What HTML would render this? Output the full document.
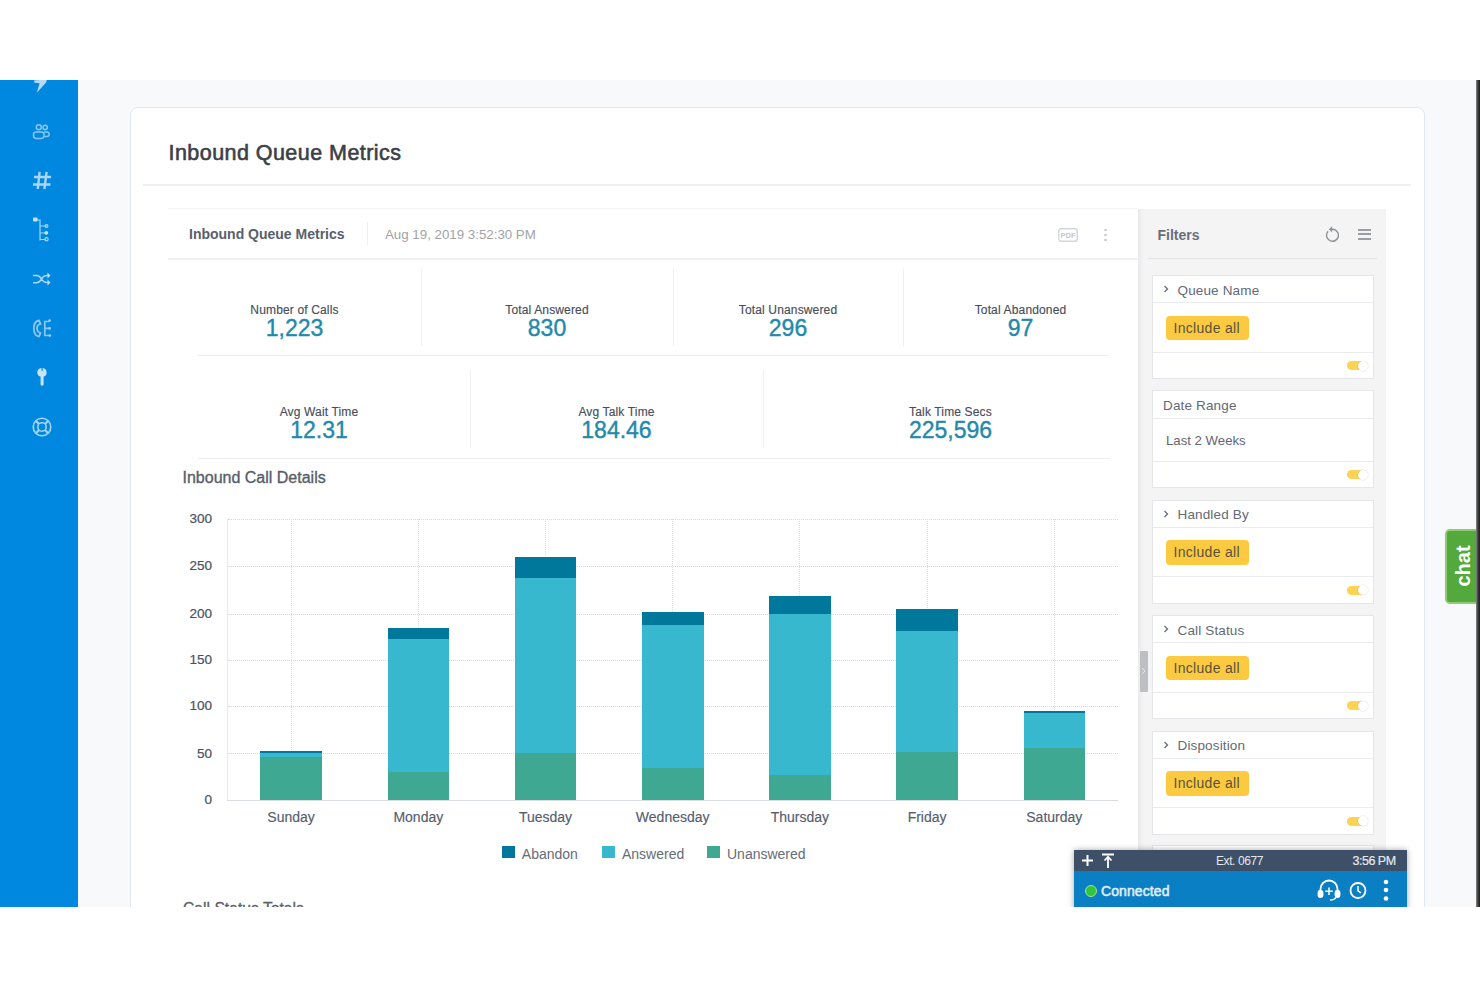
<!DOCTYPE html>
<html><head><meta charset="utf-8">
<style>
*{margin:0;padding:0;box-sizing:border-box}
html,body{width:1480px;height:987px;background:#fff;overflow:hidden;font-family:"Liberation Sans",sans-serif}
.abs{position:absolute;overflow:visible}
#wrap{position:absolute;left:0;top:0;width:1480px;height:907px;overflow:hidden}
#bg{position:absolute;left:0;top:80px;width:1480px;height:827px;background:#F8F9FB}
#topw{position:absolute;left:0;top:0;width:1480px;height:80px;background:#fff;z-index:50}
#side{position:absolute;left:0;top:80px;width:78px;height:827px;background:#0088E0}
#strip{position:absolute;z-index:40;left:1476px;top:80px;width:4px;height:827px;background:linear-gradient(90deg,#8a8a8a,#3a3a3a 50%,#1e1e1e)}
#card{position:absolute;left:130px;top:106.5px;width:1295px;height:900px;background:#fff;border:1.2px solid #DFE7F0;border-radius:8px}
.t{position:absolute;white-space:nowrap;line-height:1}
.hl{position:absolute;height:1px;background:#ECEEF0}
.vl{position:absolute;width:1px;background:#EEF0F2}
.lbl{position:absolute;font-size:12px;letter-spacing:0.15px;-webkit-text-stroke:0.15px #474E5C;color:#474E5C;text-align:center;line-height:1;white-space:nowrap}
.val{position:absolute;font-size:23px;color:#1F8AAC;-webkit-text-stroke:0.4px #1F8AAC;text-align:center;line-height:1;white-space:nowrap}
.ylab{position:absolute;font-size:13.5px;color:#4A5163;-webkit-text-stroke:0.2px #4A5163;text-align:right;width:40px;line-height:1}
.xlab{position:absolute;font-size:14px;color:#555D6E;-webkit-text-stroke:0.15px #555D6E;text-align:center;width:120px;line-height:1}
.gh{position:absolute;left:228px;width:890px;height:0;border-top:1px dotted #D6D9DE}
.gv{position:absolute;top:519px;height:281px;width:0;border-left:1px dotted #DADDE1}
.bar{position:absolute;width:61.5px}
.fbox{position:absolute;left:1152px;width:222px;background:#fff;border:1px solid #E4E6E9}
.fhead{position:absolute;font-size:13.5px;letter-spacing:0.15px;color:#636A75;line-height:1;white-space:nowrap}
.chip{position:absolute;background:#FCCA40;border-radius:4px;font-size:14px;letter-spacing:0.3px;color:#58533F;line-height:24.5px;padding-left:8px;white-space:nowrap}
.tog{position:absolute;width:21px;height:11px}
.leg{position:absolute;width:13px;height:12px;top:846px}
.legt{position:absolute;font-size:14px;color:#666C78;line-height:1;top:846.8px;white-space:nowrap}
</style></head>
<body>
<div id="wrap">
<div id="bg"></div>
<div id="side"></div>
<div id="strip"></div>
<div id="card"></div>

<!-- sidebar icons -->
<svg class="abs" style="left:0;top:76px;opacity:0.82" width="78" height="380" viewBox="0 76 78 380">
  <g fill="#DDEFFC">
    <path d="M33.8 80.6 L46.8 79.5 L46.3 82.2 L36.8 92.8 L39.6 83.2 L34.6 82.8 Z"/>
  </g>
  <g fill="none" stroke="#A6D4F6" stroke-width="1.5">
    <circle cx="38.8" cy="127.3" r="2.5"/>
    <path d="M35.8 132 h5.5 q2.8 0 2.8 2.8 v0.8 q0 2.8-2.8 2.8 h-5.5 q-2.3 0-2.3-2.8 v-0.8 q0-2.8 2.3-2.8 z"/>
    <circle cx="45.2" cy="127.4" r="2.1"/>
    <path d="M44 132 h2.6 q2.6 0 2.6 2.3 q0 2.3-2.6 2.3 h-2.4"/>
  </g>
  <g stroke="#CFE8FB" stroke-width="2.4" fill="none">
    <path d="M39.6 171.8 L37.8 189 M46.6 171.8 L44.4 189 M34 177 H51 M33 184.5 H50.5"/>
  </g>
  <g fill="none" stroke="#CBE7FB" stroke-width="1.2">
    <path d="M37 220 H40 V240.5 M40 226 H46.5 M40 233 H45 M40 239.5 H46"/>
    <circle cx="46.5" cy="239.3" r="1.6"/>
    <circle cx="46.5" cy="226" r="1.4"/>
  </g>
  <g fill="#F1F8FE"><rect x="33" y="217.5" width="4.5" height="4" rx="1"/><circle cx="46.3" cy="232.8" r="1.9"/></g>
  <g fill="none" stroke="#CFE9FB" stroke-width="1.5">
    <path d="M33 275.5 H36.5 Q39.5 275.5 41.5 278.8 Q43.5 282.5 47 282.5 H49 M33 282.8 H36.5 Q39.5 282.8 41.5 279.2 Q43.5 275.5 47 275.5 H49"/>
  </g>
  <g fill="#E3F2FD"><path d="M47.5 272.5 L50.5 275.5 L47.5 278.5 Z M47.5 279.5 L50.5 282.5 L47.5 285.5 Z"/></g>
  <g fill="none" stroke="#A9D6F7" stroke-width="1.8">
    <path d="M39 320.5 Q34 321 33.8 328.3 Q34 336 39 336.5 L40.5 333 Q37 332 37 328.3 Q37 324.5 40.5 323.8 Z"/>
    <path d="M49 321.5 H44.8 V335.5 H49 M44.8 328.3 H49" stroke-width="1.7"/>
    <circle cx="49.6" cy="320.6" r="1.3" fill="#BFE1F9" stroke="none"/><circle cx="49.6" cy="328.3" r="1.4" fill="#BFE1F9" stroke="none"/><circle cx="49.8" cy="335.6" r="1.4" fill="#BFE1F9" stroke="none"/>
  </g>
  <g fill="#F3F9FE">
    <path d="M41.4 368 Q37.3 368.6 37.3 372.4 Q37.4 375.8 40.6 376.6 V385 Q42.1 386.5 43.6 385 V376.6 Q46.6 375.8 46.6 372.4 Q46.6 368.6 42.8 368 L42.5 371 Q42.1 371.8 41.7 371 Z"/>
  </g>
  <g fill="none" stroke="#C7E5FA" stroke-width="1.6">
    <circle cx="42" cy="427" r="8.8"/>
    <circle cx="42" cy="427" r="4.2"/>
    <path d="M44.97 429.97 L48.22 433.22 M39.03 429.97 L35.78 433.22 M39.03 424.03 L35.78 420.78 M44.97 424.03 L48.22 420.78" stroke-width="2.2"/>
  </g>
</svg>

<!-- title -->
<div class="t" style="left:168.5px;top:143.3px;font-size:21.5px;letter-spacing:0.45px;color:#3C4047;-webkit-text-stroke:0.6px #3C4047">Inbound Queue Metrics</div>
<div class="hl" style="left:143px;top:184px;width:1268px;height:1.5px;background:#EDEFF1"></div>

<!-- panel header -->
<div class="hl" style="left:168px;top:208px;width:970px;background:#F2F3F5"></div>
<div class="t" style="left:189px;top:227px;font-size:14px;font-weight:bold;color:#59606D">Inbound Queue Metrics</div>
<div class="vl" style="left:367px;top:222px;height:23px;background:#EDEFF1"></div>
<div class="t" style="left:385px;top:227.5px;font-size:13.3px;color:#9FA3A9">Aug 19, 2019 3:52:30 PM</div>
<svg class="abs" style="left:1058px;top:228px" width="20" height="14" viewBox="0 0 20 14">
  <rect x="0.7" y="0.7" width="18.6" height="12.6" rx="2.5" fill="none" stroke="#D4D6D9" stroke-width="1.4"/>
  <text x="10" y="10" font-family="Liberation Sans" font-size="7.5" font-weight="bold" fill="#C3C6CB" text-anchor="middle">PDF</text>
</svg>
<div class="abs" style="left:1104px;top:228.6px;width:2.5px;height:2.5px;border-radius:1px;background:#C8CBCF"></div>
<div class="abs" style="left:1104px;top:233.6px;width:2.5px;height:2.5px;border-radius:1px;background:#C8CBCF"></div>
<div class="abs" style="left:1104px;top:238.6px;width:2.5px;height:2.5px;border-radius:1px;background:#C8CBCF"></div>
<div class="hl" style="left:168px;top:257.5px;width:970px;height:2px;background:#EFF0F2"></div>

<!-- metrics row 1 -->
<div class="vl" style="left:421px;top:268px;height:78px"></div>
<div class="vl" style="left:673px;top:268px;height:78px"></div>
<div class="vl" style="left:903px;top:268px;height:78px"></div>
<div class="lbl" style="left:168px;top:303.8px;width:253px">Number of Calls</div>
<div class="val" style="left:168px;top:317px;width:253px">1,223</div>
<div class="lbl" style="left:421px;top:303.8px;width:252px">Total Answered</div>
<div class="val" style="left:421px;top:317px;width:252px">830</div>
<div class="lbl" style="left:673px;top:303.8px;width:230px">Total Unanswered</div>
<div class="val" style="left:673px;top:317px;width:230px">296</div>
<div class="lbl" style="left:903px;top:303.8px;width:235px">Total Abandoned</div>
<div class="val" style="left:903px;top:317px;width:235px">97</div>
<div class="hl" style="left:197px;top:355px;width:912px"></div>

<!-- metrics row 2 -->
<div class="vl" style="left:470px;top:370px;height:78px"></div>
<div class="vl" style="left:763px;top:370px;height:78px"></div>
<div class="lbl" style="left:168px;top:405.5px;width:302px">Avg Wait Time</div>
<div class="val" style="left:168px;top:419px;width:302px">12.31</div>
<div class="lbl" style="left:470px;top:405.5px;width:293px">Avg Talk Time</div>
<div class="val" style="left:470px;top:419px;width:293px">184.46</div>
<div class="lbl" style="left:763px;top:405.5px;width:375px">Talk Time Secs</div>
<div class="val" style="left:763px;top:419px;width:375px">225,596</div>
<div class="hl" style="left:197px;top:458px;width:912px"></div>

<!-- chart -->
<div class="t" style="left:182.5px;top:469.9px;font-size:16px;color:#585E69;-webkit-text-stroke:0.35px #585E69">Inbound Call Details</div>
<div class="gh" style="top:753.3px"></div>
<div class="gh" style="top:705.9px"></div>
<div class="gh" style="top:659.8px"></div>
<div class="gh" style="top:613.6px"></div>
<div class="gh" style="top:565.9px"></div>
<div class="gh" style="top:518.5px"></div>
<div class="ylab" style="left:172px;top:792.9px">0</div>
<div class="ylab" style="left:172px;top:746.7px">50</div>
<div class="ylab" style="left:172px;top:699.3px">100</div>
<div class="ylab" style="left:172px;top:653.2px">150</div>
<div class="ylab" style="left:172px;top:607.0px">200</div>
<div class="ylab" style="left:172px;top:559.3px">250</div>
<div class="ylab" style="left:172px;top:511.9px">300</div>
<div class="gv" style="left:290.6px"></div>
<div class="gv" style="left:417.8px"></div>
<div class="gv" style="left:545.0px"></div>
<div class="gv" style="left:672.2px"></div>
<div class="gv" style="left:799.4px"></div>
<div class="gv" style="left:926.6px"></div>
<div class="gv" style="left:1053.8px"></div>
<div class="bar" style="left:260.4px;top:750.6px;height:2.4px;background:#00789B"></div>
<div class="bar" style="left:260.4px;top:753px;height:4.3px;background:#38B8CE"></div>
<div class="bar" style="left:260.4px;top:757.3px;height:42.7px;background:#3EA892"></div>
<div class="xlab" style="left:231.1px;top:809.8px">Sunday</div>
<div class="bar" style="left:387.6px;top:628.3px;height:10.5px;background:#00789B"></div>
<div class="bar" style="left:387.6px;top:638.8px;height:132.8px;background:#38B8CE"></div>
<div class="bar" style="left:387.6px;top:771.6px;height:28.4px;background:#3EA892"></div>
<div class="xlab" style="left:358.3px;top:809.8px">Monday</div>
<div class="bar" style="left:514.8px;top:557px;height:20.6px;background:#00789B"></div>
<div class="bar" style="left:514.8px;top:577.6px;height:175.7px;background:#38B8CE"></div>
<div class="bar" style="left:514.8px;top:753.3px;height:46.7px;background:#3EA892"></div>
<div class="xlab" style="left:485.5px;top:809.8px">Tuesday</div>
<div class="bar" style="left:642.0px;top:611.7px;height:13.6px;background:#00789B"></div>
<div class="bar" style="left:642.0px;top:625.3px;height:143.0px;background:#38B8CE"></div>
<div class="bar" style="left:642.0px;top:768.3px;height:31.7px;background:#3EA892"></div>
<div class="xlab" style="left:612.7px;top:809.8px">Wednesday</div>
<div class="bar" style="left:769.1px;top:595.5px;height:18.0px;background:#00789B"></div>
<div class="bar" style="left:769.1px;top:613.5px;height:161.7px;background:#38B8CE"></div>
<div class="bar" style="left:769.1px;top:775.2px;height:24.8px;background:#3EA892"></div>
<div class="xlab" style="left:739.9px;top:809.8px">Thursday</div>
<div class="bar" style="left:896.4px;top:608.5px;height:22.4px;background:#00789B"></div>
<div class="bar" style="left:896.4px;top:630.9px;height:121.2px;background:#38B8CE"></div>
<div class="bar" style="left:896.4px;top:752.1px;height:47.9px;background:#3EA892"></div>
<div class="xlab" style="left:867.1px;top:809.8px">Friday</div>
<div class="bar" style="left:1023.5px;top:710.5px;height:2.4px;background:#00789B"></div>
<div class="bar" style="left:1023.5px;top:712.9px;height:35.4px;background:#38B8CE"></div>
<div class="bar" style="left:1023.5px;top:748.3px;height:51.7px;background:#3EA892"></div>
<div class="xlab" style="left:994.3px;top:809.8px">Saturday</div>
<div class="abs" style="left:227px;top:519px;width:1.2px;height:282px;background:#E8EAED"></div>
<div class="abs" style="left:227px;top:799.5px;width:891px;height:1.5px;background:#D9DCE0"></div>
<div class="leg" style="left:501.5px;background:#00789B"></div><div class="legt" style="left:521.8px">Abandon</div>
<div class="leg" style="left:601.5px;background:#38B8CE"></div><div class="legt" style="left:622px">Answered</div>
<div class="leg" style="left:707px;background:#3EA892"></div><div class="legt" style="left:727px">Unanswered</div>
<div class="t" style="left:183px;top:900.5px;font-size:15.7px;color:#5A606C;-webkit-text-stroke:0.3px #5A606C">Call Status Totals</div>

<!-- filters panel -->
<div class="abs" style="left:1138px;top:208.5px;width:248px;height:720px;background:linear-gradient(90deg,#ECECEE 0,#F1F1F2 3px,#F4F4F5 5px);border-left:1px solid #E9EAEC"></div>
<div class="t" style="left:1157.5px;top:227.7px;font-size:14px;font-weight:bold;color:#696F78">Filters</div>
<svg class="abs" style="left:1323px;top:225px" width="17" height="18" viewBox="0 0 17 18">
  <path d="M5 6.2 A6 6 0 1 0 8.5 4.3" fill="none" stroke="#8E9399" stroke-width="1.5"/>
  <path d="M9.2 1.2 L9.2 7.5 L5.8 4.3 Z" fill="#8E9399"/>
</svg>
<div class="abs" style="left:1357.5px;top:228.5px;width:13.5px;height:2px;background:#9A9EA4"></div>
<div class="abs" style="left:1357.5px;top:233px;width:13.5px;height:2px;background:#9A9EA4"></div>
<div class="abs" style="left:1357.5px;top:237.5px;width:13.5px;height:2px;background:#9A9EA4"></div>
<div class="hl" style="left:1148px;top:257.5px;width:229px;background:#E1E3E6"></div>
<div class="fbox" style="top:275px;height:104.0px"></div>
<div class="hl" style="left:1153px;top:302.0px;width:220px;background:#E9EBEE"></div>
<div class="hl" style="left:1153px;top:351.5px;width:220px;background:#E9EBEE"></div>
<svg class="abs" style="left:1163px;top:285.0px" width="6" height="8" viewBox="0 0 6 8"><path d="M1.5 1 L4.5 4 L1.5 7" fill="none" stroke="#6B7280" stroke-width="1.4"/></svg>
<div class="fhead" style="left:1177.5px;top:283.6px">Queue Name</div>
<div class="chip" style="left:1165.5px;top:315.5px;width:83px;height:24.5px">Include all</div>
<div class="tog" style="left:1347px;top:360.0px"><div style="position:absolute;left:0;top:1px;width:19px;height:9px;border-radius:5px;background:#FCD352"></div><div style="position:absolute;left:11px;top:0.5px;width:10px;height:10px;border-radius:5px;background:#fff;box-shadow:0 0 1px 0.4px rgba(0,0,0,0.12)"></div></div>
<div class="fbox" style="top:390px;height:98.0px"></div>
<div class="hl" style="left:1153px;top:417.5px;width:220px;background:#E9EBEE"></div>
<div class="hl" style="left:1153px;top:461.0px;width:220px;background:#E9EBEE"></div>
<div class="fhead" style="left:1163px;top:398.6px">Date Range</div>
<div class="fhead" style="left:1166px;top:433.6px;color:#5F6672;font-size:13.2px;letter-spacing:0">Last 2 Weeks</div>
<div class="tog" style="left:1347px;top:469.2px"><div style="position:absolute;left:0;top:1px;width:19px;height:9px;border-radius:5px;background:#FCD352"></div><div style="position:absolute;left:11px;top:0.5px;width:10px;height:10px;border-radius:5px;background:#fff;box-shadow:0 0 1px 0.4px rgba(0,0,0,0.12)"></div></div>
<div class="fbox" style="top:499.6px;height:104.0px"></div>
<div class="hl" style="left:1153px;top:526.6px;width:220px;background:#E9EBEE"></div>
<div class="hl" style="left:1153px;top:576.1px;width:220px;background:#E9EBEE"></div>
<svg class="abs" style="left:1163px;top:509.6px" width="6" height="8" viewBox="0 0 6 8"><path d="M1.5 1 L4.5 4 L1.5 7" fill="none" stroke="#6B7280" stroke-width="1.4"/></svg>
<div class="fhead" style="left:1177.5px;top:508.2px">Handled By</div>
<div class="chip" style="left:1165.5px;top:540.1px;width:83px;height:24.5px">Include all</div>
<div class="tog" style="left:1347px;top:584.6px"><div style="position:absolute;left:0;top:1px;width:19px;height:9px;border-radius:5px;background:#FCD352"></div><div style="position:absolute;left:11px;top:0.5px;width:10px;height:10px;border-radius:5px;background:#fff;box-shadow:0 0 1px 0.4px rgba(0,0,0,0.12)"></div></div>
<div class="fbox" style="top:615px;height:104.0px"></div>
<div class="hl" style="left:1153px;top:642.0px;width:220px;background:#E9EBEE"></div>
<div class="hl" style="left:1153px;top:691.5px;width:220px;background:#E9EBEE"></div>
<svg class="abs" style="left:1163px;top:625.0px" width="6" height="8" viewBox="0 0 6 8"><path d="M1.5 1 L4.5 4 L1.5 7" fill="none" stroke="#6B7280" stroke-width="1.4"/></svg>
<div class="fhead" style="left:1177.5px;top:623.6px">Call Status</div>
<div class="chip" style="left:1165.5px;top:655.5px;width:83px;height:24.5px">Include all</div>
<div class="tog" style="left:1347px;top:700.0px"><div style="position:absolute;left:0;top:1px;width:19px;height:9px;border-radius:5px;background:#FCD352"></div><div style="position:absolute;left:11px;top:0.5px;width:10px;height:10px;border-radius:5px;background:#fff;box-shadow:0 0 1px 0.4px rgba(0,0,0,0.12)"></div></div>
<div class="fbox" style="top:730.5px;height:104.0px"></div>
<div class="hl" style="left:1153px;top:757.5px;width:220px;background:#E9EBEE"></div>
<div class="hl" style="left:1153px;top:807.0px;width:220px;background:#E9EBEE"></div>
<svg class="abs" style="left:1163px;top:740.5px" width="6" height="8" viewBox="0 0 6 8"><path d="M1.5 1 L4.5 4 L1.5 7" fill="none" stroke="#6B7280" stroke-width="1.4"/></svg>
<div class="fhead" style="left:1177.5px;top:739.1px">Disposition</div>
<div class="chip" style="left:1165.5px;top:771.0px;width:83px;height:24.5px">Include all</div>
<div class="tog" style="left:1347px;top:815.5px"><div style="position:absolute;left:0;top:1px;width:19px;height:9px;border-radius:5px;background:#FCD352"></div><div style="position:absolute;left:11px;top:0.5px;width:10px;height:10px;border-radius:5px;background:#fff;box-shadow:0 0 1px 0.4px rgba(0,0,0,0.12)"></div></div>
<div class="fbox" style="top:845px;height:104.0px"></div>
<div class="hl" style="left:1153px;top:872.0px;width:220px;background:#E9EBEE"></div>
<div class="hl" style="left:1153px;top:921.5px;width:220px;background:#E9EBEE"></div>
<div class="chip" style="left:1165.5px;top:885.5px;width:83px;height:24.5px">Include all</div>
<div class="tog" style="left:1347px;top:930.0px"><div style="position:absolute;left:0;top:1px;width:19px;height:9px;border-radius:5px;background:#FCD352"></div><div style="position:absolute;left:11px;top:0.5px;width:10px;height:10px;border-radius:5px;background:#fff;box-shadow:0 0 1px 0.4px rgba(0,0,0,0.12)"></div></div>
<div class="abs" style="left:1139.5px;top:651px;width:8px;height:41px;background:#BDBFC2;border-radius:1px"></div>
<svg class="abs" style="left:1140px;top:666px" width="7" height="10" viewBox="0 0 7 10"><path d="M2 2 L5 5 L2 8" fill="none" stroke="#E8E9EA" stroke-width="1"/></svg>

<!-- chat tab -->
<div class="abs" style="left:1445px;top:529px;width:40px;height:75px;background:#53A93B;border:2px solid #8FCB73;border-radius:5px"></div>
<div class="t" style="top:566px;font-size:20px;font-weight:bold;color:#fff;transform:translate(-50%,-50%) rotate(-90deg);transform-origin:center;left:1463px">chat</div>

<!-- phone widget -->
<div class="abs" style="left:1073.5px;top:850px;width:333.5px;height:60px;box-shadow:0 0 6px rgba(0,0,0,0.35)">
  <div class="abs" style="left:0;top:0;width:333.5px;height:20.5px;background:#3D5068"></div>
  <div class="abs" style="left:0;top:20.5px;width:333.5px;height:40px;background:#0A7FC3"></div>
</div>
<svg class="abs" style="left:1080px;top:852px" width="40" height="18" viewBox="0 0 40 18">
  <path d="M7.5 3 V14 M2 8.5 H13" stroke="#fff" stroke-width="2"/>
  <path d="M22 2.5 H34 M28 5 V16 M24.5 8.5 L28 4.8 L31.5 8.5" fill="none" stroke="#fff" stroke-width="1.8"/>
</svg>
<div class="t" style="left:1239.5px;top:855px;font-size:12px;color:#E3E8EE;letter-spacing:-0.4px;transform:translateX(-50%)">Ext. 0677</div>
<div class="t" style="left:1352.5px;top:854.5px;font-size:12.5px;color:#E3E8EE;letter-spacing:-0.5px;-webkit-text-stroke:0.2px #E3E8EE">3:56 PM</div>
<div class="abs" style="left:1084.5px;top:884.5px;width:12px;height:12px;border-radius:6px;background:#35C53A;border:1.5px solid #9BE39B"></div>
<div class="t" style="left:1101px;top:884px;font-size:14px;color:#E2EFF9;letter-spacing:0.1px;-webkit-text-stroke:0.5px #E2EFF9">Connected</div>
<svg class="abs" style="left:1316px;top:878px" width="80" height="26" viewBox="0 0 80 26">
  <g fill="none" stroke="#fff" stroke-width="1.8">
    <path d="M4.5 15 V11 A8.5 8.5 0 0 1 21.5 11 V15"/>
    <rect x="2.5" y="13" width="4" height="6" rx="1.5" fill="#fff"/>
    <rect x="19.5" y="13" width="4" height="6" rx="1.5" fill="#fff"/>
    <path d="M13 9.5 V17 M9.3 13.3 H16.7" stroke-width="1.5"/>
    <path d="M20 19 Q19 22 14 22" stroke-width="1.3"/>
    <circle cx="42" cy="12.5" r="7.5"/>
    <path d="M42 8 V12.8 L45 14.8" stroke-width="1.5"/>
  </g>
  <g fill="#fff">
    <circle cx="70" cy="4" r="2.3"/><circle cx="70" cy="12" r="2.3"/><circle cx="70" cy="20.5" r="2.3"/>
  </g>
</svg>

<div id="topw"></div>
</div>
</body></html>
